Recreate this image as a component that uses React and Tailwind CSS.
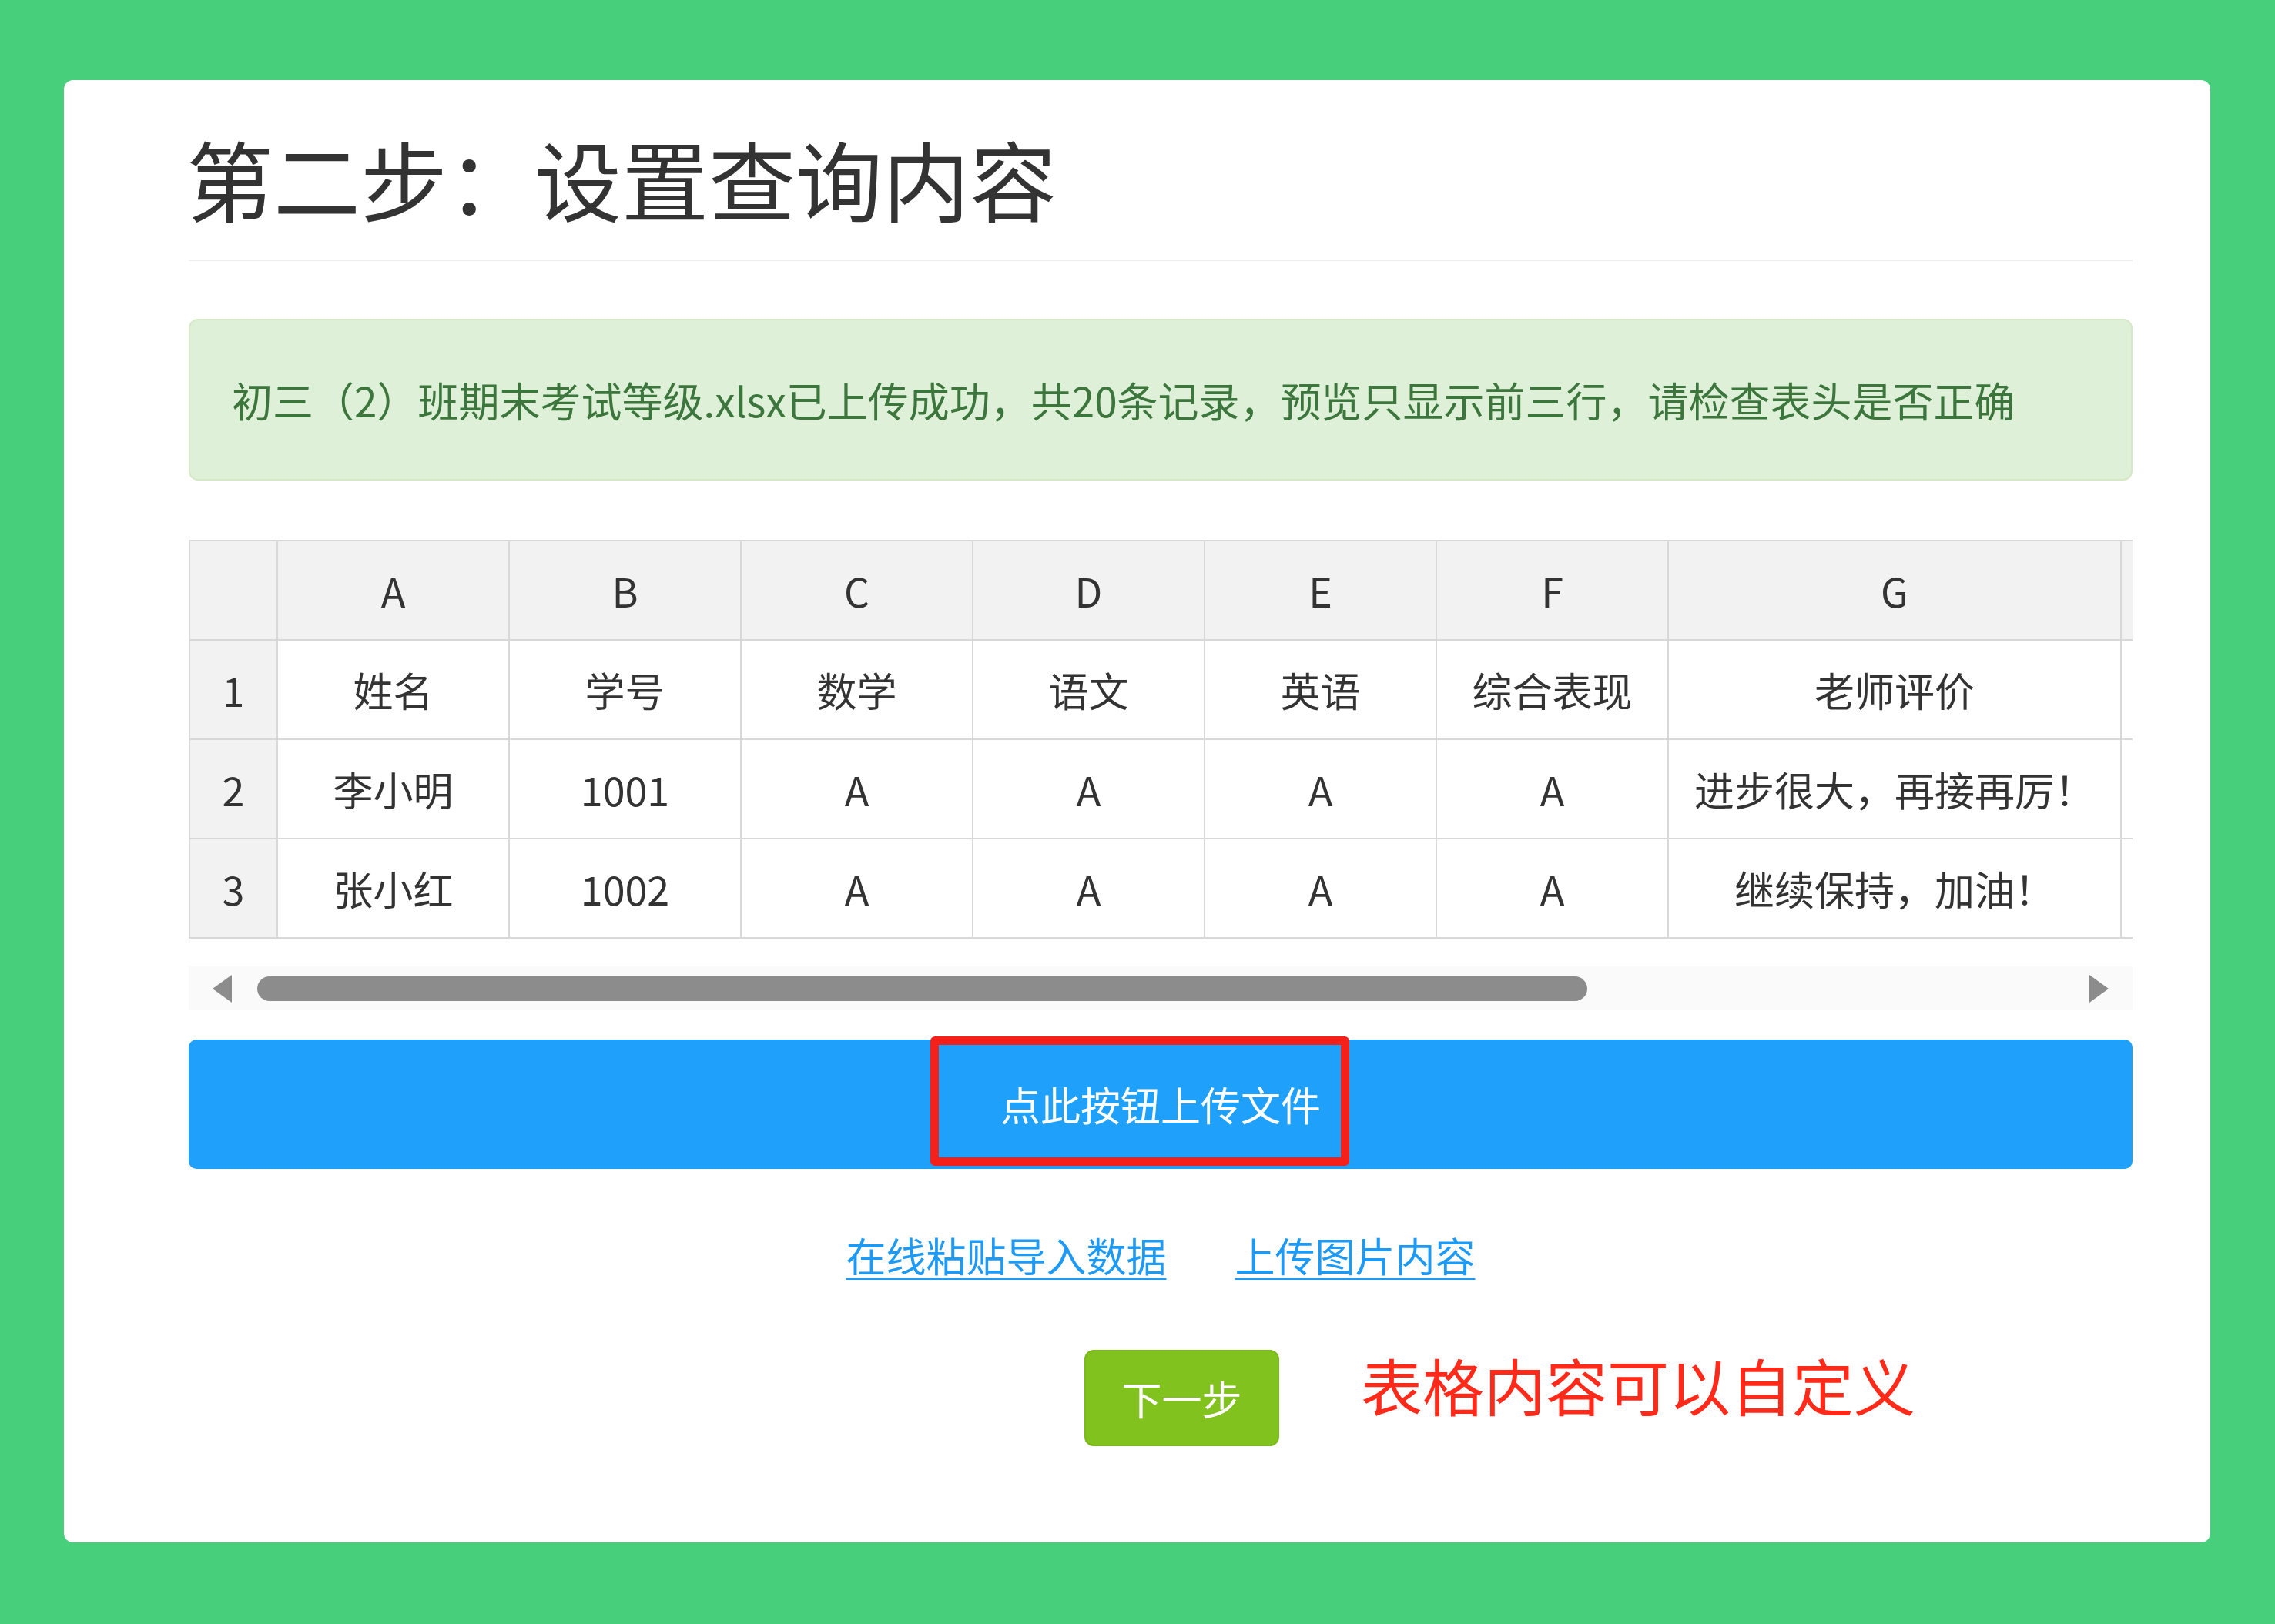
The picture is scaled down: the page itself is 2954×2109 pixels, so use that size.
import React from "react";

const cols = ["A", "B", "C", "D", "E", "F", "G", "H"];

const rows = [
  ["1", "姓名", "学号", "数学", "语文", "英语", "综合表现", "老师评价", ""],
  ["2", "李小明", "1001", "A", "A", "A", "A", "进步很大，再接再厉！", ""],
  ["3", "张小红", "1002", "A", "A", "A", "A", "继续保持，加油！", ""],
];

function Cell({ children, head }) {
  return (
    <div
      className={`h-[129px] flex items-center justify-center border-r-2 border-b-2 border-[#d8d8d8] whitespace-nowrap ${
        head ? "bg-[#f2f2f2]" : "bg-white"
      }`}
    >
      {children}
    </div>
  );
}

function PreviewTable() {
  return (
    <div className="mt-[77px] w-full overflow-hidden">
      <div className="grid grid-cols-[114px_repeat(6,301px)_588px_300px] w-max border-t-2 border-l-2 border-[#d8d8d8] text-[52px] leading-none text-[#333]">
        {/* column letters */}
        <Cell head />
        {cols.map((c) => (
          <Cell key={c} head>
            {c === "H" ? "" : c}
          </Cell>
        ))}
        {rows.map((r) =>
          r.map((v, i) => (
            <Cell key={r[0] + "-" + i} head={i === 0}>
              {v}
            </Cell>
          ))
        )}
      </div>
    </div>
  );
}

function ScrollBar() {
  return (
    <div className="mt-[36px] h-[57px] bg-[#fafafa] flex items-center px-[31px]">
      <svg width="25" height="36" viewBox="0 0 25 36">
        <polygon points="25,0 25,36 0,18" fill="#8c8c8c" />
      </svg>
      <div className="ml-[33px] w-[1727px] h-[32px] rounded-full bg-[#8c8c8c]" />
      <div className="flex-1" />
      <svg width="25" height="36" viewBox="0 0 25 36">
        <polygon points="0,0 0,36 25,18" fill="#8c8c8c" />
      </svg>
    </div>
  );
}

export default function App() {
  return (
    <div className="min-h-[2109px] bg-[#48cf7c] pt-[104px] pb-[106px] pl-[83px] pr-[84px] font-['Noto_Sans_CJK_SC','Microsoft_YaHei',sans-serif]">
      <div className="h-[1899px] bg-white rounded-[12px] pt-[70px] pl-[162px] pr-[101px]">
        {/* Title */}
        <div className="pb-[50px] border-b-2 border-[#eeeeee]">
          <h1 className="text-[113px] leading-none text-[#333] whitespace-nowrap -ml-[3px]">
            第二步：设置查询内容
          </h1>
        </div>

        {/* Success alert */}
        <div className="mt-[75px] h-[210px] flex items-center pl-[54px] bg-[#dff0d8] border-2 border-[#d6e9c6] rounded-[12px] text-[#3c763d] text-[53px] leading-none whitespace-nowrap">
          初三（2）班期末考试等级.xlsx已上传成功，共20条记录，预览只显示前三行，请检查表头是否正确
        </div>

        <PreviewTable />
        <ScrollBar />

        {/* Upload button */}
        <div className="relative mt-[38px]">
          <button className="w-full h-[168px] bg-[#1fa0fb] rounded-[10px] text-white text-[52px] leading-none">
            点此按钮上传文件
          </button>
          <div className="absolute left-[963px] top-[-4px] w-[544px] h-[168px] border-[11px] border-[#f5201a] rounded-[6px] pointer-events-none" />
        </div>

        {/* Links */}
        <div className="mt-[86px] flex justify-center gap-[89px] text-[52px] leading-none text-[#1e9af5]">
          <a href="#" className="underline underline-offset-[8px] decoration-2">
            在线粘贴导入数据
          </a>
          <a href="#" className="underline underline-offset-[8px] decoration-2">
            上传图片内容
          </a>
        </div>

        {/* Next step */}
        <div className="mt-[97px] flex justify-center pl-[55px]">
          <div className="relative">
            <button className="w-[253px] h-[125px] bg-[#82c21f] border-2 border-[#7ab81c] rounded-[12px] text-white text-[52px] leading-none">
              下一步
            </button>
            <span className="absolute left-full ml-[106px] top-[4px] text-[80px] leading-none text-[#ff2a1a] whitespace-nowrap">
              表格内容可以自定义
            </span>
          </div>
        </div>
      </div>
    </div>
  );
}
